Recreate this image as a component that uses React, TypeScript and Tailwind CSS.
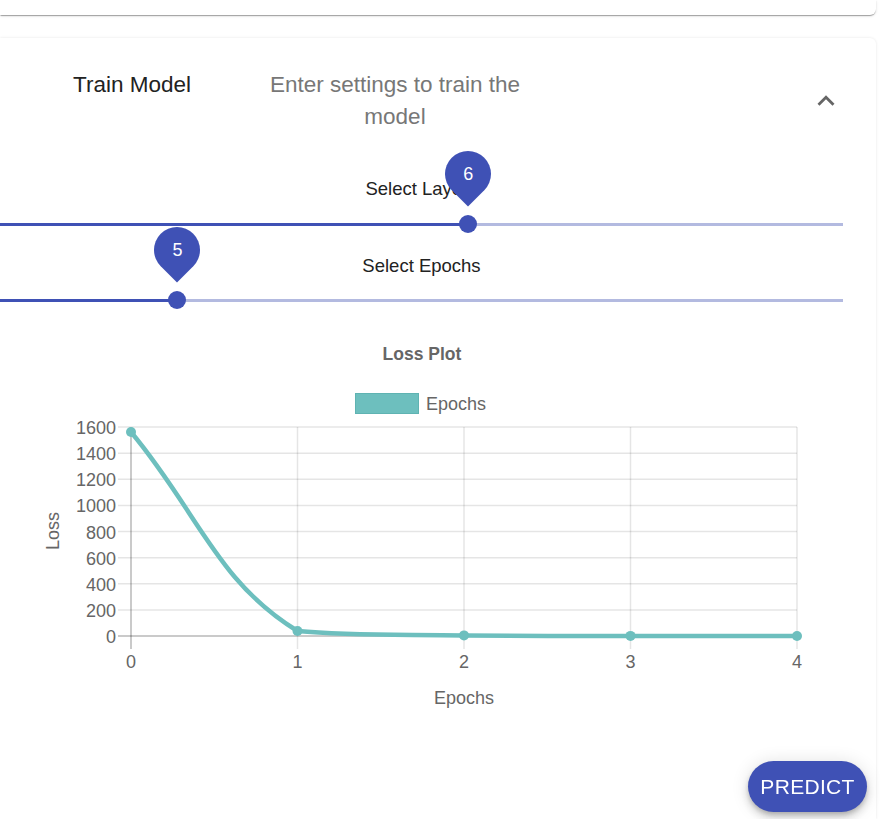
import React from "react";

const teal = "#6dbfbe";

interface SliderRowProps {
  label: string;
  value: number;
  min: number;
  max: number;
  gap: string;
}

const SliderRow = ({ label, value, min, max, gap }: SliderRowProps) => {
  const pct = ((value - min) / (max - min)) * 100;
  return (
    <div className="flex flex-col items-center w-[843px]">
      <div className="h-[22px] leading-[22px] text-[18.5px] text-[#222]">{label}</div>
      <div className={`relative w-full h-[18px] ${gap}`}>
        <div className="absolute left-0 right-0 top-[7.5px] h-[3px] bg-[#b3bae0]" />
        <div
          className="absolute left-0 top-[7.5px] h-[3px] bg-[#3f51b5]"
          style={{ width: `${pct}%` }}
        />
        <div
          className="absolute top-0 w-[18px] h-[18px] -ml-[9px] rounded-full bg-[#3f51b5]"
          style={{ left: `${pct}%` }}
        />
        <div
          className="absolute z-10 top-[-64px] w-[46px] h-[46px] -ml-[23px] flex items-center justify-center"
          style={{ left: `${pct}%` }}
        >
          <div className="absolute inset-0 -rotate-45 rounded-[50%_50%_50%_0] bg-[#3f51b5]" />
          <span className="relative text-white text-[18px] leading-none">{value}</span>
        </div>
      </div>
    </div>
  );
};

const yTicks = [0, 200, 400, 600, 800, 1000, 1200, 1400, 1600];
const xTicks = [0, 1, 2, 3, 4];
const yOf = (v: number) => 635 - (v * 209) / 1600;
const xOf = (i: number) => 131 + i * 166.5;
const points = [
  [131, 431],
  [297.5, 630],
  [464, 634.4],
  [630.5, 634.9],
  [797, 635],
];

const LossChart = () => (
  <svg
    width={843}
    height={390}
    viewBox="0 330 843 390"
    className="block"
    fontFamily="'Liberation Sans', Arial, sans-serif"
  >
    <text x={422} y={353} textAnchor="middle" dominantBaseline="central" fontSize={17.5} fontWeight="bold" fill="#666">
      Loss Plot
    </text>
    <rect x={355.5} y={392.5} width={63} height={20} fill={teal} stroke="#5fb3b2" />
    <text x={426} y={403} dominantBaseline="central" fontSize={18} fill="#666">
      Epochs
    </text>

    {yTicks.map((v) => (
      <line
        key={`h${v}`}
        x1={118}
        x2={797}
        y1={yOf(v)}
        y2={yOf(v)}
        stroke={v === 0 ? "rgba(0,0,0,0.28)" : "rgba(0,0,0,0.1)"}
        strokeWidth={1.5}
      />
    ))}
    {xTicks.map((i) => (
      <line
        key={`v${i}`}
        x1={xOf(i)}
        x2={xOf(i)}
        y1={426}
        y2={648}
        stroke={i === 0 ? "rgba(0,0,0,0.28)" : "rgba(0,0,0,0.1)"}
        strokeWidth={1.5}
      />
    ))}

    {yTicks.map((v) => (
      <text key={`yl${v}`} x={116} y={yOf(v) + 1} textAnchor="end" dominantBaseline="central" fontSize={18} fill="#666">
        {v}
      </text>
    ))}
    {xTicks.map((i) => (
      <text key={`xl${i}`} x={xOf(i)} y={661} textAnchor="middle" dominantBaseline="central" fontSize={18} fill="#666">
        {i}
      </text>
    ))}

    <text
      x={53}
      y={530}
      textAnchor="middle"
      dominantBaseline="central"
      fontSize={18}
      fill="#666"
      transform="rotate(-90 53 530)"
    >
      Loss
    </text>
    <text x={464} y={697} textAnchor="middle" dominantBaseline="central" fontSize={18} fill="#666">
      Epochs
    </text>

    <path
      d="M131,431 C197.6,510.6 216.5,580.3 297.5,630 C349.5,635 397.6,633.4 464,634.4 C530.6,635 564.4,635 630.5,634.9 C697,635 730.4,635 797,635"
      fill="none"
      stroke={teal}
      strokeWidth={4.5}
    />
    {points.map(([x, y]) => (
      <circle key={x} cx={x} cy={y} r={5} fill={teal} />
    ))}
  </svg>
);

export default function App() {
  return (
    <div className="relative min-h-[819px] bg-white overflow-hidden font-['Liberation_Sans',Arial,sans-serif]">
      <div className="h-[15px] w-[876px] rounded-br-[6px] bg-white shadow-[0_2px_1px_-1px_rgba(0,0,0,0.2),0_1px_1px_0_rgba(0,0,0,0.14),0_1px_3px_0_rgba(0,0,0,0.12)]" />

      <div className="mt-[23px] w-[876px] min-h-[781px] rounded-tr-[6px] bg-white shadow-[0_0_3px_rgba(0,0,0,0.1)]">
        <div className="flex items-center pt-[31px]">
          <div className="flex items-start">
            <div className="ml-[73px] w-[182px] text-[22.5px] leading-[32px] text-[#222]">Train Model</div>
            <div className="w-[280px] text-center text-[22.5px] leading-[32px] text-[#777]">
              Enter settings to train the model
            </div>
          </div>
          <svg width={34} height={34} viewBox="0 0 24 24" className="ml-[274px]" fill="#666">
            <path d="M12 8l-6 6 1.41 1.41L12 10.83l4.59 4.58L18 14z" />
          </svg>
        </div>

        <div className="mt-[45px] flex flex-col">
          <SliderRow label="Select Layers" value={6} min={1} max={10} gap="mt-[15px]" />
          <div className="mt-[22px]">
            <SliderRow label="Select Epochs" value={5} min={1} max={20} gap="mt-[14px]" />
          </div>
          <div className="mt-[22px]">
            <LossChart />
          </div>
        </div>
      </div>

      <button className="fixed right-[13px] bottom-[7px] w-[119px] h-[51px] rounded-full bg-[#3f51b5] text-white text-[21px] tracking-[0.3px] shadow-[0_3px_5px_-1px_rgba(0,0,0,0.2),0_6px_10px_0_rgba(0,0,0,0.14),0_1px_18px_0_rgba(0,0,0,0.12)]">
        PREDICT
      </button>
    </div>
  );
}
